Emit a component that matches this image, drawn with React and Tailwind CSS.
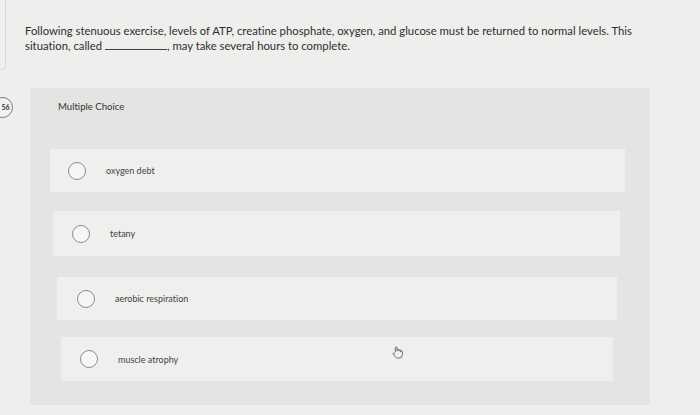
import React from "react";

const options = [
  { label: "oxygen debt", ml: "ml-[20px]", mr: "mr-[25px]", radio: "ml-[18px]", h: "h-[43px]", mt: "mt-[35px]" },
  { label: "tetany", ml: "ml-[23px]", mr: "mr-[30px]", radio: "ml-[19px]", h: "h-[45px]", mt: "mt-[19px]" },
  { label: "aerobic respiration", ml: "ml-[27px]", mr: "mr-[33px]", radio: "ml-[20px]", h: "h-[43px]", mt: "mt-[21px]" },
  { label: "muscle atrophy", ml: "ml-[31px]", mr: "mr-[37px]", radio: "ml-[19px]", h: "h-[44px]", mt: "mt-[17px]" },
];

function Radio() {
  return (
    <span className="block w-[18px] h-[18px] rounded-full border-[1.5px] border-[#8d8d8d] bg-[#f6f6f5]" />
  );
}

function HandCursor() {
  return (
    <svg width="14" height="14" viewBox="0 0 16 16" fill="none" stroke="#666" strokeWidth="1.1" strokeLinejoin="round">
      <path d="M5 8V3.2a1 1 0 0 1 2 0V7m0-1a1 1 0 0 1 2 0v1m0-.5a1 1 0 0 1 2 0V8m0-.5a1 1 0 0 1 2 0V11a4 4 0 0 1-4 4H8a4 4 0 0 1-3.2-1.6L2.6 10.5a1 1 0 0 1 1.5-1.3L5 10" />
    </svg>
  );
}

export default function App() {
  return (
    <div
      className="relative w-[700px] h-[415px] overflow-hidden bg-[#eeeeec] text-[#333] [font-variant-ligatures:none]"
      style={{ fontFamily: "Lato, 'Liberation Sans', Arial, sans-serif" }}
    >
      {/* sidebar edge + question number badge */}
      <div className="absolute left-[-10px] top-[-4px] w-[16px] h-[74px] rounded-[4px] border border-[#d9d9d7] bg-[#f0f0ee]" />
      <div className="absolute left-[-8px] top-[97px] w-[21px] h-[21px] rounded-full border border-[#777] bg-[#f2f2f0] flex items-center justify-center">
        <span className="text-[7px] font-bold text-[#333] pl-[6px]">56</span>
      </div>

      <div className="h-[88px] pl-[25px] pt-[23px] text-[11.3px] leading-[15px] text-[#2e2e2e] whitespace-nowrap">
        <p>
          Following stenuous exercise, levels of ATP, creatine phosphate, oxygen, and glucose must be returned to normal levels. This
        </p>
        <p>
          situation, called{" "}
          <span className="inline-block w-[62px] border-b border-[#444]" />, may take several hours to complete.
        </p>
      </div>

      <div className="ml-[30px] w-[620px] h-[317px] bg-[#e4e4e2] pt-[12px]">
        <p className="pl-[28px] text-[9.6px] text-[#333]">Multiple Choice</p>
        {options.map((o) => (
          <div
            key={o.label}
            className={`${o.ml} ${o.mr} ${o.h} ${o.mt} bg-[#efefed] flex items-center relative`}
          >
            <div className={o.radio}>
              <Radio />
            </div>
            <span className="ml-[20px] text-[9px] text-[#444]">{o.label}</span>
            {o.label === "muscle atrophy" && (
              <span className="absolute left-[330px] top-[8px]">
                <HandCursor />
              </span>
            )}
          </div>
        ))}
      </div>
    </div>
  );
}
